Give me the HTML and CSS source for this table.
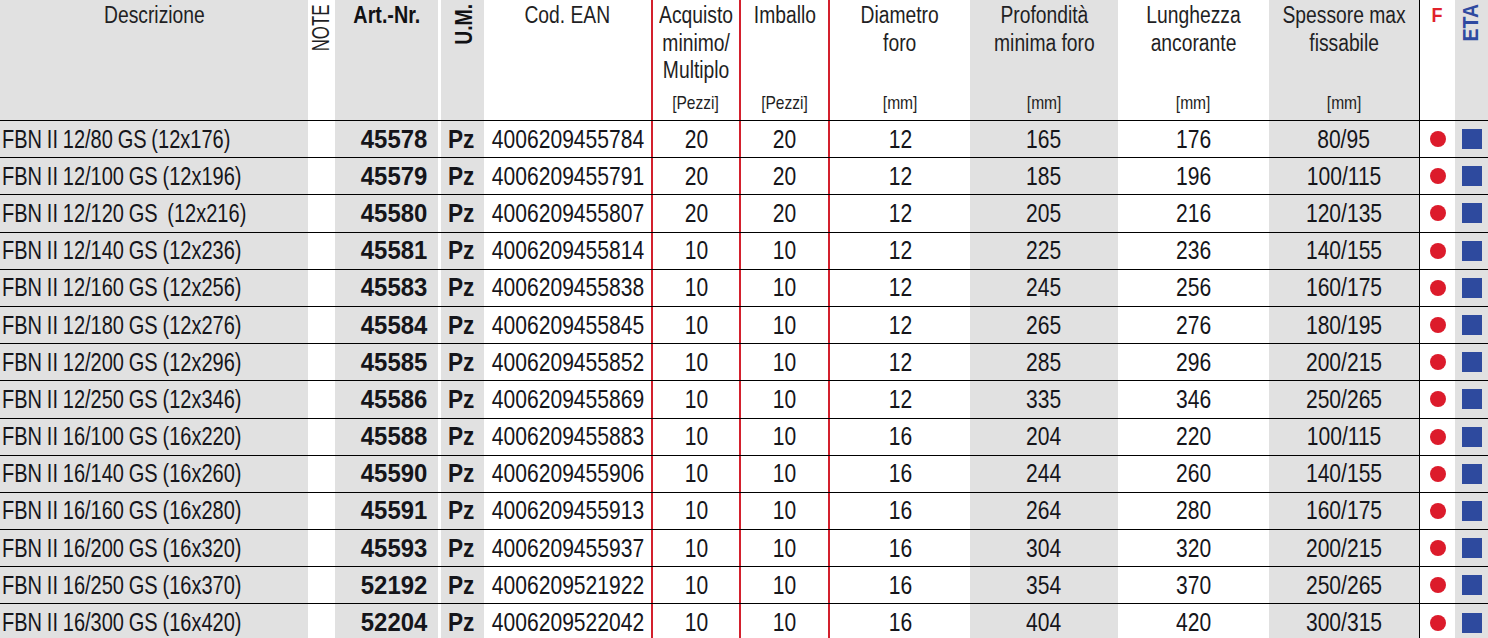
FILE: index.html
```html
<!DOCTYPE html>
<html lang="it">
<head>
<meta charset="utf-8">
<title>FBN II GS</title>
<link rel="stylesheet" href="styles.css">
</head>
<body>
<div class="sheet">
  <div class="row head">
    <div class="cell gray"><span class="ht">Descrizione</span></div>
    <div class="cell top"><span class="vt note">NOTE</span></div>
    <div class="cell gray"><span class="ht bold">Art.-Nr.</span></div>
    <div class="sep"></div>
    <div class="cell gray top"><span class="vt bold um">U.M.</span></div>
    <div class="cell"><span class="ht">Cod. EAN</span></div>
    <div class="cell red"><span class="ht">Acquisto<br>minimo/<br>Multiplo</span><span class="unit">[Pezzi]</span></div>
    <div class="cell red"><span class="ht">Imballo</span><span class="unit">[Pezzi]</span></div>
    <div class="cell red"><span class="ht">Diametro<br>foro</span><span class="unit">[mm]</span></div>
    <div class="cell gray"><span class="ht">Profondità<br>minima foro</span><span class="unit">[mm]</span></div>
    <div class="cell"><span class="ht">Lunghezza<br>ancorante</span><span class="unit">[mm]</span></div>
    <div class="cell gray"><span class="ht">Spessore max<br>fissabile</span><span class="unit">[mm]</span></div>
    <div class="vline"></div>
    <div class="cell"><span class="fhead">F</span></div>
    <div class="cell gray top"><span class="vt bold eta">ETA</span></div>
  </div>

  <div class="row item"><div class="d desc gray"><span>FBN II 12/80 GS (12x176)</span></div><div class="d"></div><div class="d gray art"><span>45578</span></div><div class="sep"></div><div class="d gray pz"><span>Pz</span></div><div class="d"><span>4006209455784</span></div><div class="d red"><span>20</span></div><div class="d red"><span>20</span></div><div class="d red"><span>12</span></div><div class="d gray"><span>165</span></div><div class="d"><span>176</span></div><div class="d gray"><span>80/95</span></div><div class="vline"></div><div class="d"><i class="dot"></i></div><div class="d gray"><i class="sq"></i></div></div>
  <div class="row item"><div class="d desc gray"><span>FBN II 12/100 GS (12x196)</span></div><div class="d"></div><div class="d gray art"><span>45579</span></div><div class="sep"></div><div class="d gray pz"><span>Pz</span></div><div class="d"><span>4006209455791</span></div><div class="d red"><span>20</span></div><div class="d red"><span>20</span></div><div class="d red"><span>12</span></div><div class="d gray"><span>185</span></div><div class="d"><span>196</span></div><div class="d gray"><span>100/115</span></div><div class="vline"></div><div class="d"><i class="dot"></i></div><div class="d gray"><i class="sq"></i></div></div>
  <div class="row item"><div class="d desc gray"><span>FBN II 12/120 GS &nbsp;(12x216)</span></div><div class="d"></div><div class="d gray art"><span>45580</span></div><div class="sep"></div><div class="d gray pz"><span>Pz</span></div><div class="d"><span>4006209455807</span></div><div class="d red"><span>20</span></div><div class="d red"><span>20</span></div><div class="d red"><span>12</span></div><div class="d gray"><span>205</span></div><div class="d"><span>216</span></div><div class="d gray"><span>120/135</span></div><div class="vline"></div><div class="d"><i class="dot"></i></div><div class="d gray"><i class="sq"></i></div></div>
  <div class="row item"><div class="d desc gray"><span>FBN II 12/140 GS (12x236)</span></div><div class="d"></div><div class="d gray art"><span>45581</span></div><div class="sep"></div><div class="d gray pz"><span>Pz</span></div><div class="d"><span>4006209455814</span></div><div class="d red"><span>10</span></div><div class="d red"><span>10</span></div><div class="d red"><span>12</span></div><div class="d gray"><span>225</span></div><div class="d"><span>236</span></div><div class="d gray"><span>140/155</span></div><div class="vline"></div><div class="d"><i class="dot"></i></div><div class="d gray"><i class="sq"></i></div></div>
  <div class="row item"><div class="d desc gray"><span>FBN II 12/160 GS (12x256)</span></div><div class="d"></div><div class="d gray art"><span>45583</span></div><div class="sep"></div><div class="d gray pz"><span>Pz</span></div><div class="d"><span>4006209455838</span></div><div class="d red"><span>10</span></div><div class="d red"><span>10</span></div><div class="d red"><span>12</span></div><div class="d gray"><span>245</span></div><div class="d"><span>256</span></div><div class="d gray"><span>160/175</span></div><div class="vline"></div><div class="d"><i class="dot"></i></div><div class="d gray"><i class="sq"></i></div></div>
  <div class="row item"><div class="d desc gray"><span>FBN II 12/180 GS (12x276)</span></div><div class="d"></div><div class="d gray art"><span>45584</span></div><div class="sep"></div><div class="d gray pz"><span>Pz</span></div><div class="d"><span>4006209455845</span></div><div class="d red"><span>10</span></div><div class="d red"><span>10</span></div><div class="d red"><span>12</span></div><div class="d gray"><span>265</span></div><div class="d"><span>276</span></div><div class="d gray"><span>180/195</span></div><div class="vline"></div><div class="d"><i class="dot"></i></div><div class="d gray"><i class="sq"></i></div></div>
  <div class="row item"><div class="d desc gray"><span>FBN II 12/200 GS (12x296)</span></div><div class="d"></div><div class="d gray art"><span>45585</span></div><div class="sep"></div><div class="d gray pz"><span>Pz</span></div><div class="d"><span>4006209455852</span></div><div class="d red"><span>10</span></div><div class="d red"><span>10</span></div><div class="d red"><span>12</span></div><div class="d gray"><span>285</span></div><div class="d"><span>296</span></div><div class="d gray"><span>200/215</span></div><div class="vline"></div><div class="d"><i class="dot"></i></div><div class="d gray"><i class="sq"></i></div></div>
  <div class="row item"><div class="d desc gray"><span>FBN II 12/250 GS (12x346)</span></div><div class="d"></div><div class="d gray art"><span>45586</span></div><div class="sep"></div><div class="d gray pz"><span>Pz</span></div><div class="d"><span>4006209455869</span></div><div class="d red"><span>10</span></div><div class="d red"><span>10</span></div><div class="d red"><span>12</span></div><div class="d gray"><span>335</span></div><div class="d"><span>346</span></div><div class="d gray"><span>250/265</span></div><div class="vline"></div><div class="d"><i class="dot"></i></div><div class="d gray"><i class="sq"></i></div></div>
  <div class="row item"><div class="d desc gray"><span>FBN II 16/100 GS (16x220)</span></div><div class="d"></div><div class="d gray art"><span>45588</span></div><div class="sep"></div><div class="d gray pz"><span>Pz</span></div><div class="d"><span>4006209455883</span></div><div class="d red"><span>10</span></div><div class="d red"><span>10</span></div><div class="d red"><span>16</span></div><div class="d gray"><span>204</span></div><div class="d"><span>220</span></div><div class="d gray"><span>100/115</span></div><div class="vline"></div><div class="d"><i class="dot"></i></div><div class="d gray"><i class="sq"></i></div></div>
  <div class="row item"><div class="d desc gray"><span>FBN II 16/140 GS (16x260)</span></div><div class="d"></div><div class="d gray art"><span>45590</span></div><div class="sep"></div><div class="d gray pz"><span>Pz</span></div><div class="d"><span>4006209455906</span></div><div class="d red"><span>10</span></div><div class="d red"><span>10</span></div><div class="d red"><span>16</span></div><div class="d gray"><span>244</span></div><div class="d"><span>260</span></div><div class="d gray"><span>140/155</span></div><div class="vline"></div><div class="d"><i class="dot"></i></div><div class="d gray"><i class="sq"></i></div></div>
  <div class="row item"><div class="d desc gray"><span>FBN II 16/160 GS (16x280)</span></div><div class="d"></div><div class="d gray art"><span>45591</span></div><div class="sep"></div><div class="d gray pz"><span>Pz</span></div><div class="d"><span>4006209455913</span></div><div class="d red"><span>10</span></div><div class="d red"><span>10</span></div><div class="d red"><span>16</span></div><div class="d gray"><span>264</span></div><div class="d"><span>280</span></div><div class="d gray"><span>160/175</span></div><div class="vline"></div><div class="d"><i class="dot"></i></div><div class="d gray"><i class="sq"></i></div></div>
  <div class="row item"><div class="d desc gray"><span>FBN II 16/200 GS (16x320)</span></div><div class="d"></div><div class="d gray art"><span>45593</span></div><div class="sep"></div><div class="d gray pz"><span>Pz</span></div><div class="d"><span>4006209455937</span></div><div class="d red"><span>10</span></div><div class="d red"><span>10</span></div><div class="d red"><span>16</span></div><div class="d gray"><span>304</span></div><div class="d"><span>320</span></div><div class="d gray"><span>200/215</span></div><div class="vline"></div><div class="d"><i class="dot"></i></div><div class="d gray"><i class="sq"></i></div></div>
  <div class="row item"><div class="d desc gray"><span>FBN II 16/250 GS (16x370)</span></div><div class="d"></div><div class="d gray art"><span>52192</span></div><div class="sep"></div><div class="d gray pz"><span>Pz</span></div><div class="d"><span>4006209521922</span></div><div class="d red"><span>10</span></div><div class="d red"><span>10</span></div><div class="d red"><span>16</span></div><div class="d gray"><span>354</span></div><div class="d"><span>370</span></div><div class="d gray"><span>250/265</span></div><div class="vline"></div><div class="d"><i class="dot"></i></div><div class="d gray"><i class="sq"></i></div></div>
  <div class="row item"><div class="d desc gray"><span>FBN II 16/300 GS (16x420)</span></div><div class="d"></div><div class="d gray art"><span>52204</span></div><div class="sep"></div><div class="d gray pz"><span>Pz</span></div><div class="d"><span>4006209522042</span></div><div class="d red"><span>10</span></div><div class="d red"><span>10</span></div><div class="d red"><span>16</span></div><div class="d gray"><span>404</span></div><div class="d"><span>420</span></div><div class="d gray"><span>300/315</span></div><div class="vline"></div><div class="d"><i class="dot"></i></div><div class="d gray"><i class="sq"></i></div></div>
</div>
</body>
</html>
```

FILE: styles.css
```css
html, body {
  margin: 0;
  padding: 0;
  background: #ffffff;
}
body {
  width: 1488px;
  height: 638px;
  overflow: hidden;
}
.sheet {
  width: 1488px;
  font-family: "Liberation Sans", Arial, sans-serif;
  color: #15151a;
}
.row {
  display: grid;
  grid-template-columns: 308px 27px 103px 3px 43px 167px 88px 89px 142px 148px 151px 150px 1px 35px 33px;
  box-sizing: border-box;
  border-bottom: 1px solid #000;
}
.head {
  height: 121px;
}
.item {
  height: 37.2px;
}
.gray {
  background: #e1e1e1;
}
.red {
  border-left: 2px solid #d3202d;
}
.sep {
  background: #ffffff;
}
.vline {
  background: #000000;
}

/* header */
.cell {
  display: flex;
  flex-direction: column;
  align-items: center;
  justify-content: space-between;
  padding: 2px 0 6px;
  box-sizing: border-box;
  min-width: 0;
}
.cell.top {
  justify-content: flex-start;
  padding-top: 0;
}
.ht {
  display: inline-block;
  font-size: 23.5px;
  line-height: 27.6px;
  text-align: center;
  white-space: nowrap;
  color: #1f1f24;
  transform: scaleX(0.82);
}
.bold {
  font-weight: bold;
}
.ht.bold {
  transform: scaleX(0.84);
  color: #111114;
}
.unit {
  display: inline-block;
  font-size: 19px;
  line-height: 22px;
  white-space: nowrap;
  color: #1f1f24;
  transform: scaleX(0.82);
}
.vt {
  writing-mode: vertical-rl;
  line-height: 1;
  white-space: nowrap;
}
.note {
  font-size: 23px;
  margin-top: -4px;
  color: #1f1f24;
  transform: rotate(180deg) scaleY(0.73);
}
.um {
  font-size: 24px;
  margin-top: -1px;
  margin-left: 2px;
  color: #111114;
  transform: rotate(180deg) scaleY(0.81);
}
.eta {
  font-size: 22.5px;
  margin-top: 1px;
  color: #2f4aa0;
  transform: rotate(180deg) scaleY(0.87);
}
.fhead {
  font-weight: bold;
  font-size: 20px;
  line-height: 26px;
  color: #e1222c;
  transform: scaleX(0.9);
}

/* data */
.d {
  display: flex;
  align-items: center;
  justify-content: center;
  font-size: 26px;
  white-space: nowrap;
  min-width: 0;
}
.d > span {
  display: inline-block;
  transform: scaleX(0.81);
}
.desc {
  justify-content: flex-start;
  padding-left: 2px;
}
.desc > span {
  transform-origin: left center;
  transform: scaleX(0.77);
  word-spacing: -1px;
}
.art {
  justify-content: flex-end;
  padding-right: 11px;
  font-weight: bold;
}
.art > span {
  transform-origin: right center;
  transform: scaleX(0.92);
}
.pz {
  font-weight: bold;
  padding-right: 3px;
}
.pz > span {
  transform: scaleX(0.87);
}
.dot {
  display: block;
  width: 16px;
  height: 16px;
  border-radius: 50%;
  background: #dc1b2b;
}
.sq {
  display: block;
  width: 20px;
  height: 20px;
  background: #2e4a9e;
}
```
